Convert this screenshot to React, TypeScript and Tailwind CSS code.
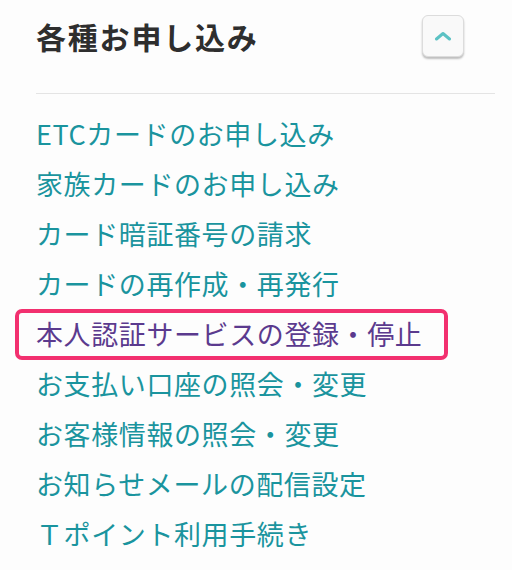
const items = [
  "ETCカードのお申し込み",
  "家族カードのお申し込み",
  "カード暗証番号の請求",
  "カードの再作成・再発行",
  "本人認証サービスの登録・停止",
  "お支払い口座の照会・変更",
  "お客様情報の照会・変更",
  "お知らせメールの配信設定",
  "Ｔポイント利用手続き",
];

export default function App() {
  return (
    <div
      className="min-h-[570px] w-[512px] bg-[#fdfdfd] pl-[36px] pr-[17px]"
      style={{ fontFamily: '"Noto Sans CJK JP", "Noto Sans", sans-serif' }}
    >
      <div className="flex h-[94px] items-start justify-between border-b border-[#e4e4e4] pt-[15px]">
        <h2 className="mt-[1px] text-[30px] font-bold leading-[40px] tracking-[1.8px] text-[#2e2e2e]">
          各種お申し込み
        </h2>
        <button className="mr-[31px] flex h-[42px] w-[42px] items-center justify-center rounded-[6px] border border-[#dcdcdc] bg-[#f9f9f9] shadow-[0_2px_2px_rgba(0,0,0,0.25)]">
          <svg width="18" height="10" viewBox="0 0 18 10" fill="none">
            <polyline
              points="2.5,8 9,2.5 15.5,8"
              stroke="#5cc2c4"
              strokeWidth="3"
              strokeLinecap="round"
              strokeLinejoin="round"
            />
          </svg>
        </button>
      </div>
      <ul className="pt-[15px]">
        {items.map((label, i) => (
          <li key={label} className="flex h-[50px] items-center">
            {i === 4 ? (
              <a
                href="#"
                className="-ml-[17px] flex h-[43px] w-[425px] items-center rounded-[3px] pl-[17px] text-[27px] tracking-[0.6px] text-[#5b3a8e] ring-4 ring-[#f2306f]"
              >
                {label}
              </a>
            ) : (
              <a href="#" className="text-[27px] tracking-[0.6px] text-[#1a949e]">
                {label}
              </a>
            )}
          </li>
        ))}
      </ul>
    </div>
  );
}
